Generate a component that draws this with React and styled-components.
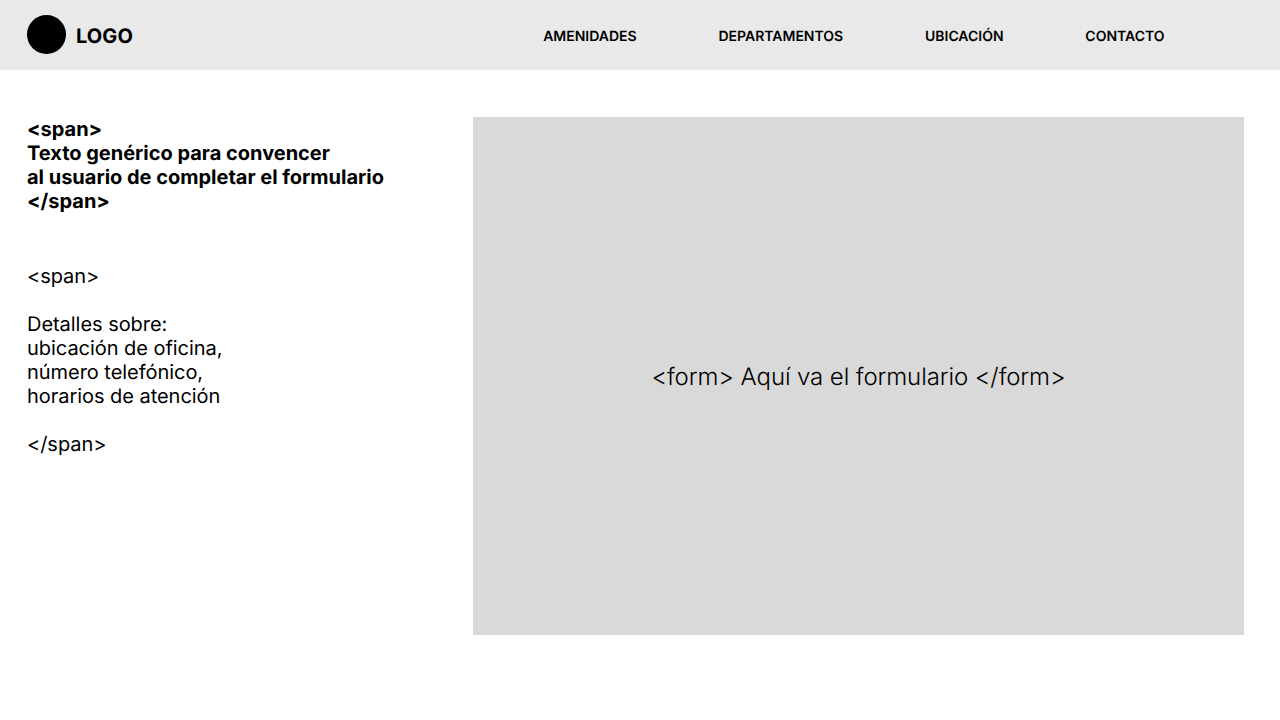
import React from "react";
import styled, { createGlobalStyle } from "styled-components";

const GlobalStyle = createGlobalStyle`
  * { box-sizing: border-box; }
  body {
    margin: 0;
    background: #fff;
    color: #000;
    font-family: Inter, "Liberation Sans", sans-serif;
    text-rendering: geometricPrecision;
  }
`;

const Page = styled.div`
  min-height: 720px;
  overflow: hidden;
`;

const Header = styled.header`
  display: flex;
  align-items: center;
  justify-content: space-between;
  height: 70px;
  padding: 0 115.4px 0 27px;
  background: #e9e9e9;
`;

const Brand = styled.div`
  display: flex;
  align-items: center;
  gap: 10px;
  padding-bottom: 1px;
`;

const BrandMark = styled.div`
  width: 39px;
  height: 39px;
  border-radius: 50%;
  background: #000;
`;

const BrandName = styled.span`
  padding-top: 2px;
  font-size: 20px;
  font-weight: 700;
  line-height: 24px;
  letter-spacing: 0.1px;
`;

const Nav = styled.nav`
  display: flex;
  gap: 81.8px;
  padding-top: 2px;
`;

const NavLink = styled.a`
  font-size: 14px;
  font-weight: 600;
  line-height: 17px;
`;

const Main = styled.main`
  display: grid;
  grid-template-columns: 446px 771px;
  padding-top: 47px;
  padding-left: 27px;
`;

const Copy = styled.section`
  display: flex;
  flex-direction: column;
  gap: 51px;
  font-size: 20px;
  line-height: 24px;
  white-space: pre-line;
`;

const Headline = styled.span`
  font-weight: 700;
  letter-spacing: -0.015px;
`;

const Details = styled.span`
  font-weight: 400;
  letter-spacing: -0.04px;
`;

const FormPanel = styled.section`
  display: flex;
  align-items: center;
  justify-content: center;
  height: 518px;
  background: #d9d9d9;
`;

const FormLabel = styled.span`
  font-size: 24px;
  font-weight: 300;
  line-height: 29px;
  letter-spacing: -0.1px;
`;

const links = ["AMENIDADES", "DEPARTAMENTOS", "UBICACIÓN", "CONTACTO"];

const headline = `<span>
Texto genérico para convencer
al usuario de completar el formulario
</span>`;

const details = `<span>

Detalles sobre:
ubicación de oficina,
número telefónico,
horarios de atención

</span>`;

export default function App() {
  return (
    <Page>
      <GlobalStyle />
      <Header>
        <Brand>
          <BrandMark />
          <BrandName>LOGO</BrandName>
        </Brand>
        <Nav>
          {links.map((link) => (
            <NavLink key={link}>{link}</NavLink>
          ))}
        </Nav>
      </Header>
      <Main>
        <Copy>
          <Headline>{headline}</Headline>
          <Details>{details}</Details>
        </Copy>
        <FormPanel>
          <FormLabel>{"<form> Aquí va el formulario </form>"}</FormLabel>
        </FormPanel>
      </Main>
    </Page>
  );
}
